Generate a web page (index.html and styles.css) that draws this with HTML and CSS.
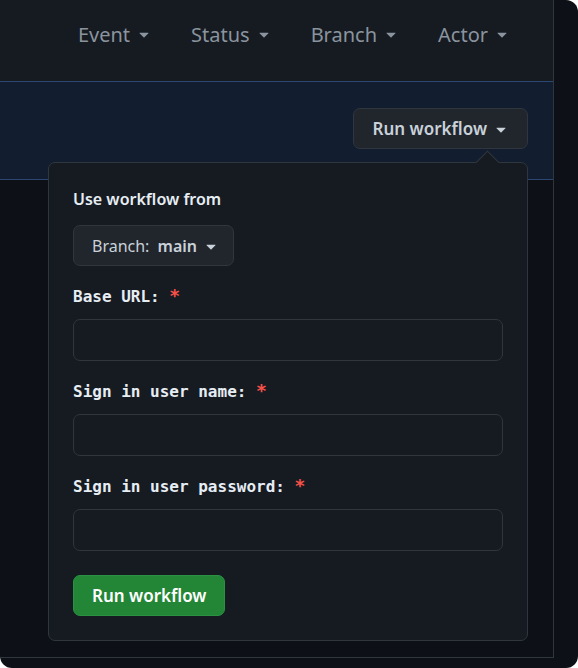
FILE: index.html
```html
<!DOCTYPE html>
<html lang="en">
<head>
    <meta charset="UTF-8">
    <meta name="viewport" content="width=device-width, initial-scale=1.0">
    <title>Run workflow</title>
    <link rel="stylesheet" href="styles.css">
</head>
<body>

<div class="frame">
    <div class="box">
        <div class="filters">
            <span class="filter">Event <svg class="caret" viewBox="0 0 16 16"><path d="m4.427 7.427 3.396 3.396a.25.25 0 0 0 .354 0l3.396-3.396A.25.25 0 0 0 11.396 7H4.604a.25.25 0 0 0-.177.427Z"/></svg></span>
            <span class="filter">Status <svg class="caret" viewBox="0 0 16 16"><path d="m4.427 7.427 3.396 3.396a.25.25 0 0 0 .354 0l3.396-3.396A.25.25 0 0 0 11.396 7H4.604a.25.25 0 0 0-.177.427Z"/></svg></span>
            <span class="filter">Branch <svg class="caret" viewBox="0 0 16 16"><path d="m4.427 7.427 3.396 3.396a.25.25 0 0 0 .354 0l3.396-3.396A.25.25 0 0 0 11.396 7H4.604a.25.25 0 0 0-.177.427Z"/></svg></span>
            <span class="filter">Actor <svg class="caret" viewBox="0 0 16 16"><path d="m4.427 7.427 3.396 3.396a.25.25 0 0 0 .354 0l3.396-3.396A.25.25 0 0 0 11.396 7H4.604a.25.25 0 0 0-.177.427Z"/></svg></span>
        </div>

        <div class="banner">
            <div class="dispatch">
                <button type="button" class="btn">Run workflow <svg class="caret" viewBox="0 0 16 16"><path d="m4.427 7.427 3.396 3.396a.25.25 0 0 0 .354 0l3.396-3.396A.25.25 0 0 0 11.396 7H4.604a.25.25 0 0 0-.177.427Z"/></svg></button>

                <div class="popover">
                    <div class="popover-title">Use workflow from</div>
                    <button type="button" class="btn btn-branch">Branch:&nbsp;<strong>main</strong> <svg class="caret" viewBox="0 0 16 16"><path d="m4.427 7.427 3.396 3.396a.25.25 0 0 0 .354 0l3.396-3.396A.25.25 0 0 0 11.396 7H4.604a.25.25 0 0 0-.177.427Z"/></svg></button>

                    <div class="field">
                        <label>Base URL: <span class="req">*</span></label>
                        <input type="text" name="baseUrl">
                    </div>
                    <div class="field">
                        <label>Sign in user name: <span class="req">*</span></label>
                        <input type="text" name="userName">
                    </div>
                    <div class="field">
                        <label>Sign in user password: <span class="req">*</span></label>
                        <input type="text" name="userPassword">
                    </div>

                    <button type="button" class="btn-primary">Run workflow</button>
                </div>
            </div>
        </div>
    </div>
</div>

</body>
</html>
```

FILE: styles.css
```css
body {
    margin: 0;
    background: #ffffff;
    font-family: "Noto Sans", sans-serif;
}
.frame {
    width: 578px;
    height: 668px;
    background: #0d1117;
    border-radius: 0 12px 12px 12px;
    overflow: hidden;
}
.box {
    width: 553px;
    height: 657px;
    border-right: 1px solid #30363d;
    border-bottom: 1px solid #30363d;
    display: flex;
    flex-direction: column;
}
.filters {
    height: 82px;
    flex-shrink: 0;
    box-sizing: border-box;
    padding: 21px 41px 0 0;
    background: #161b22;
    border-bottom: 1px solid #2b4770;
    display: flex;
    justify-content: flex-end;
    gap: 37px;
}
.filter {
    display: flex;
    align-items: center;
    gap: 4px;
    height: 26px;
    font-size: 20px;
    color: #8b949e;
}
.caret {
    width: 20px;
    height: 20px;
    fill: currentColor;
}
.banner {
    height: 98px;
    flex-shrink: 0;
    box-sizing: border-box;
    background: #121d2f;
    border-bottom: 1px solid #2b4770;
    display: flex;
    justify-content: flex-end;
    padding: 26px 25px 0 0;
}
.dispatch {
    position: relative;
    height: 41px;
}
.btn {
    display: flex;
    align-items: center;
    gap: 4px;
    height: 41px;
    padding: 0 16px 0 19px;
    background: #21262d;
    border: 1px solid #30363d;
    border-radius: 7px;
    color: #c9d1d9;
    font-family: "Noto Sans", sans-serif;
    font-size: 17px;
    font-weight: 600;
}
.popover {
    position: absolute;
    top: 54px;
    right: 0;
    width: 480px;
    height: 479px;
    box-sizing: border-box;
    padding: 24px 24px 0 24px;
    background: #161b22;
    border: 1px solid #30363d;
    border-radius: 7px;
}
.popover::before {
    content: "";
    position: absolute;
    top: -9px;
    right: 31px;
    width: 16px;
    height: 16px;
    background: #161b22;
    border-top: 1px solid #30363d;
    border-left: 1px solid #30363d;
    transform: rotate(45deg);
}
.popover-title {
    font-size: 16px;
    font-weight: 600;
    color: #e6edf3;
    line-height: 24px;
}
.btn-branch {
    margin-top: 14px;
    height: 41px;
    padding: 0 12px 0 18px;
    font-weight: 400;
    font-size: 16px;
}
.btn-branch strong {
    font-weight: 600;
}
.field {
    margin-top: 19px;
}
.field label {
    display: block;
    height: 24px;
    font-family: "DejaVu Sans Mono", monospace;
    font-weight: bold;
    font-size: 16px;
    line-height: 24px;
    color: #e6edf3;
}
.req {
    color: #f85149;
    font-size: 18px;
    line-height: 1;
}
.field input {
    display: block;
    margin-top: 10px;
    width: 100%;
    height: 42px;
    box-sizing: border-box;
    background: #161b22;
    border: 1px solid #30363d;
    border-radius: 7px;
}
.btn-primary {
    margin-top: 24px;
    height: 41px;
    padding: 0 18px;
    background: #238636;
    border: 1px solid #2a9242;
    border-radius: 7px;
    color: #ffffff;
    font-family: "Noto Sans", sans-serif;
    font-size: 17px;
    font-weight: 600;
}
```
